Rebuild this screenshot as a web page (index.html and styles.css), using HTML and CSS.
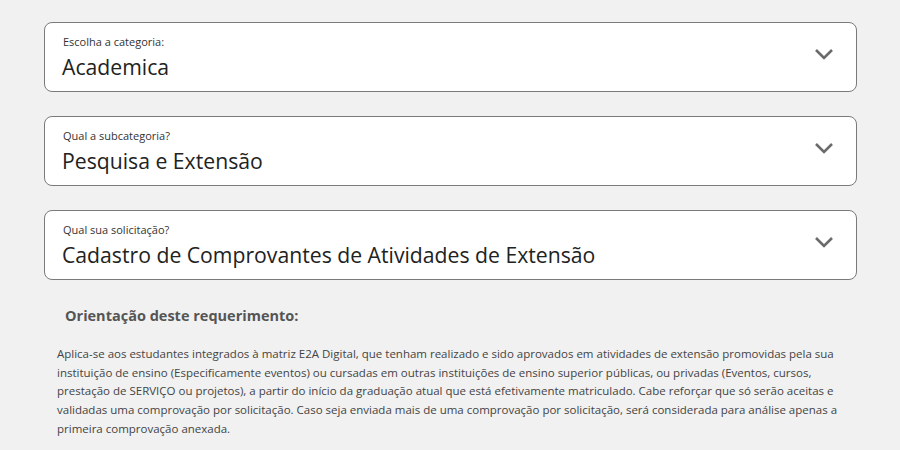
FILE: index.html
```html
<!DOCTYPE html>
<html lang="pt">
<head>
<meta charset="utf-8">
<link rel="stylesheet" href="styles.css">
</head>
<body>
<main class="page">
  <div class="select">
    <div class="select-text">
      <span class="label">Escolha a categoria:</span>
      <span class="value">Academica</span>
    </div>
    <svg class="chevron" width="20" height="12" viewBox="0 0 20 12"><path d="M2 2 L10 10 L18 2" fill="none" stroke="#6b6b6b" stroke-width="2.6"/></svg>
  </div>
  <div class="select">
    <div class="select-text">
      <span class="label">Qual a subcategoria?</span>
      <span class="value">Pesquisa e Extensão</span>
    </div>
    <svg class="chevron" width="20" height="12" viewBox="0 0 20 12"><path d="M2 2 L10 10 L18 2" fill="none" stroke="#6b6b6b" stroke-width="2.6"/></svg>
  </div>
  <div class="select">
    <div class="select-text">
      <span class="label">Qual sua solicitação?</span>
      <span class="value">Cadastro de Comprovantes de Atividades de Extensão</span>
    </div>
    <svg class="chevron" width="20" height="12" viewBox="0 0 20 12"><path d="M2 2 L10 10 L18 2" fill="none" stroke="#6b6b6b" stroke-width="2.6"/></svg>
  </div>
  <section class="guide">
    <h2 class="guide-title">Orientação deste requerimento:</h2>
    <p class="guide-text">Aplica-se aos estudantes integrados à matriz E2A Digital, que tenham realizado e sido aprovados em atividades de extensão promovidas pela sua instituição de ensino (Especificamente eventos) ou cursadas em outras instituições de ensino superior públicas, ou privadas (Eventos, cursos, prestação de SERVIÇO ou projetos), a partir do início da graduação atual que está efetivamente matriculado. Cabe reforçar que só serão aceitas e validadas uma comprovação por solicitação. Caso seja enviada mais de uma comprovação por solicitação, será considerada para análise apenas a primeira comprovação anexada.</p>
  </section>
</main>
</body>
</html>
```

FILE: styles.css
```css
html, body {
  margin: 0;
  padding: 0;
  background: #f1f1f1;
}
body {
  font-family: "Open Sans", "Noto Sans", sans-serif;
  color: #333;
}
.page {
  padding: 22px 43px 0 44px;
  display: flex;
  flex-direction: column;
  gap: 24px;
}
.select {
  box-sizing: border-box;
  height: 70px;
  border: 1px solid #7a7a7a;
  border-radius: 8px;
  background: #fff;
  display: flex;
  align-items: center;
  justify-content: space-between;
  padding: 0 22px 0 17px;
}
.select-text {
  display: flex;
  flex-direction: column;
  gap: 4px;
  padding-top: 2px;
}
.label {
  font-size: 11px;
  line-height: 14px;
  color: #333;
  margin-left: 1px;
}
.value {
  font-size: 21.2px;
  line-height: 28px;
  color: #222;
}
.chevron {
  display: block;
  margin-top: -6px;
}
.guide {
  margin-top: 1px;
}
.guide-title {
  margin: 0 0 0 21px;
  font-size: 14.5px;
  line-height: 22px;
  font-weight: 700;
  color: #555;
}
.guide-text {
  margin: 18px 0 0 13px;
  font-size: 11.5px;
  line-height: 18.7px;
  color: #444;
}
```
